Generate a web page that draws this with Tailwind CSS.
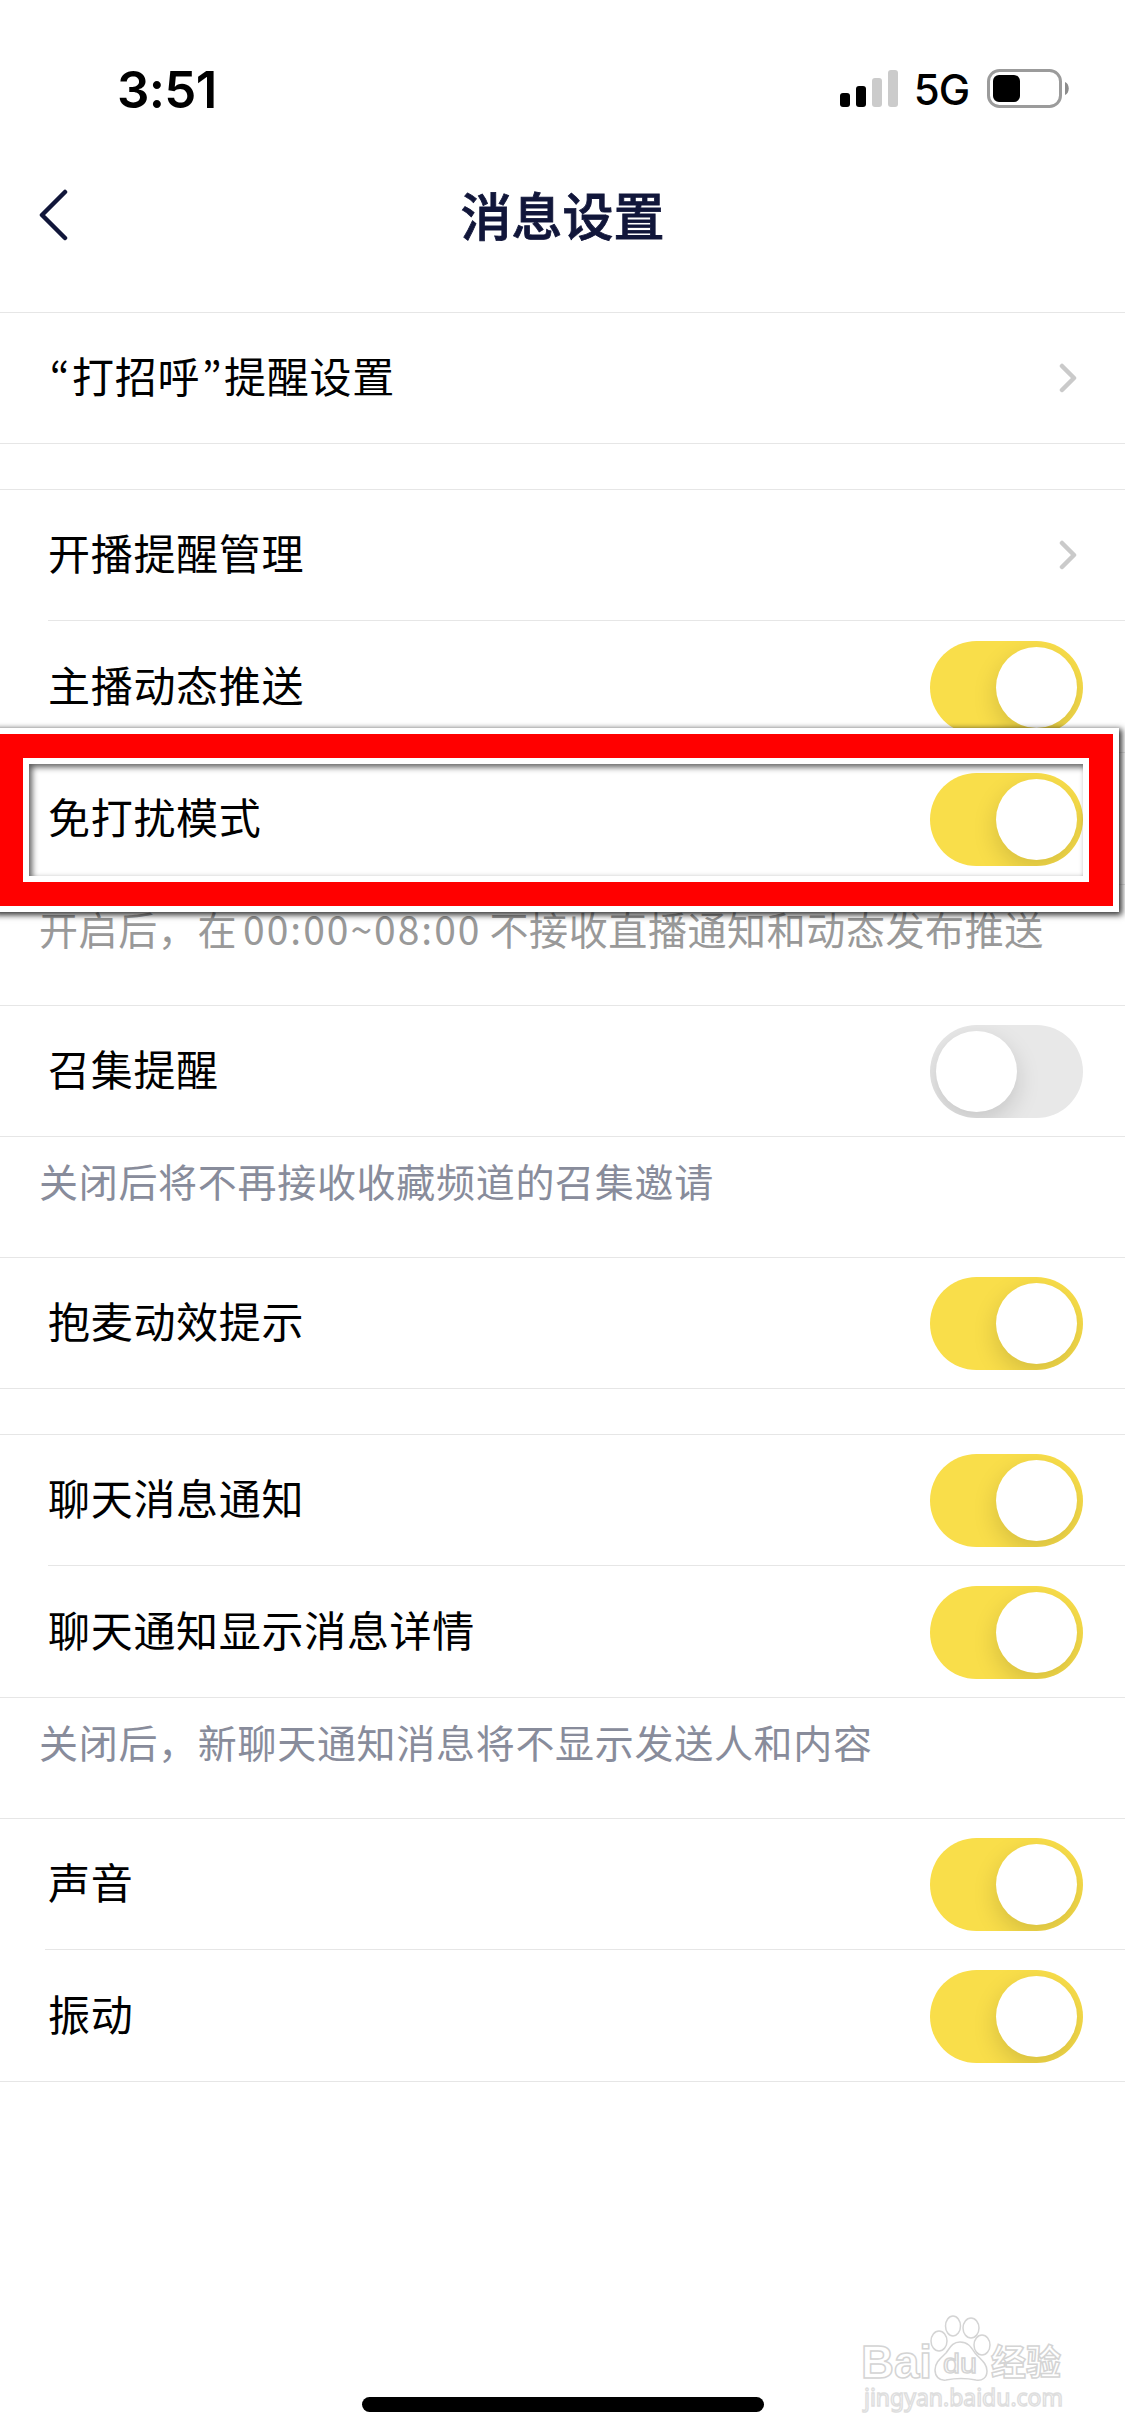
<!DOCTYPE html>
<html lang="zh-CN">
  <head>
    <meta charset="UTF-8" />
    <meta name="viewport" content="width=device-width, initial-scale=1.0" />
    <script src="https://cdn.jsdelivr.net/npm/@tailwindcss/browser@4"></script>
    <title>消息设置</title>
  </head>
  <body class="bg-white">
    <div class="relative flex flex-col w-[1125px] h-[2436px] overflow-hidden bg-white text-black font-['Noto_Sans_CJK_SC',sans-serif]">
      <!-- status bar -->
      <div class="flex items-center justify-between h-[132px] pt-[44px] pl-[117px] pr-[56px] font-['Inter',sans-serif]">
        <span class="text-[51px] leading-[90px] font-semibold tracking-[-0.7px] pt-[3px]">3:51</span>
        <div class="flex items-center">
          <svg class="w-[58px] h-[37px]" viewBox="0 0 58 37">
            <rect x="0" y="23" width="10" height="14" rx="3" />
            <rect x="16" y="16" width="10" height="21" rx="3" />
            <rect x="32" y="8" width="10" height="29" rx="3" fill="#cbcbcb" />
            <rect x="48" y="0" width="10" height="37" rx="3" fill="#cbcbcb" />
          </svg>
          <span class="w-[89px] text-center text-[42px] leading-[90px] font-medium tracking-[-1px] pt-[4px] pr-[2px]">5G</span>
          <svg class="w-[82px] h-[39px]" viewBox="0 0 82 39">
            <rect x="1.5" y="1.5" width="72" height="36" rx="11" fill="none" stroke="#9b9b9b" stroke-width="3" />
            <rect x="6" y="6" width="27" height="27" rx="6" />
            <path d="M78 13c5 2 5 11 0 13z" fill="#8c8c8c" />
          </svg>
        </div>
      </div>

      <!-- nav bar -->
      <div class="flex items-center justify-between h-[180px] pl-[38px] pr-[38px] pb-[16px] text-[#11163a]">
        <svg class="w-[30px] h-[54px] mt-[2px]" viewBox="0 0 30 54" fill="none" stroke="currentColor" stroke-width="4.5" stroke-linecap="round" stroke-linejoin="round">
          <path d="M27 4L4 27l23 23" />
        </svg>
        <h1 class="text-[51px] leading-none font-medium [-webkit-text-stroke:0.8px_#11163a]">消息设置</h1>
        <span class="w-[30px]"></span>
      </div>

      <!-- settings -->
      <main class="flex flex-col text-[42px] tracking-[0.7px]">
        <section class="border-y border-[#e6e6e6] mb-[45px]">
          <div class="flex items-center justify-between h-[130px] pl-[48px] pr-[48px]">
            <span class="flex pb-2"><span lang="ko" class="w-[24px] text-center font-['Noto_Sans_CJK_KR',sans-serif]">“</span>打招呼<span lang="ko" class="w-[24px] text-center font-['Noto_Sans_CJK_KR',sans-serif]">”</span>提醒设置</span>
            <svg class="w-[18px] h-[30px]" viewBox="0 0 18 30" fill="none" stroke="#cacaca" stroke-width="4.5" stroke-linecap="round" stroke-linejoin="round"><path d="M3 3l12 12L3 27" /></svg>
          </div>
        </section>

        <section class="border-y border-[#e6e6e6]">
          <div class="flex items-center justify-between h-[130px] pl-[48px] pr-[48px]">
            <span class="pb-2">开播提醒管理</span>
            <svg class="w-[18px] h-[30px]" viewBox="0 0 18 30" fill="none" stroke="#cacaca" stroke-width="4.5" stroke-linecap="round" stroke-linejoin="round"><path d="M3 3l12 12L3 27" /></svg>
          </div>
          <div class="flex items-center justify-between h-[132px] pt-px ml-[48px] pr-[42px] border-t border-[#e6e6e6]">
            <span class="pb-2">主播动态推送</span>
            <span class="flex justify-end w-[153px] h-[93px] p-[6px] rounded-full overflow-hidden bg-[#f9de4a]"><i class="w-[81px] h-[81px] rounded-full bg-white shadow-[0_9px_24px_rgba(0,0,0,0.15)]"></i></span>
          </div>
          <div class="flex items-center justify-between h-[132px] pt-px ml-[48px] pr-[42px] border-t border-[#e6e6e6]">
            <span class="pb-2">免打扰模式</span>
            <span class="flex justify-end w-[153px] h-[93px] p-[6px] rounded-full overflow-hidden bg-[#f9de4a]"><i class="w-[81px] h-[81px] rounded-full bg-white shadow-[0_9px_24px_rgba(0,0,0,0.15)]"></i></span>
          </div>
        </section>
        <p class="h-[120px] pt-[13px] pl-[39px] text-[39px] leading-[60px] tracking-[0.6px] text-[#999] whitespace-nowrap">开启后，在<span class="tracking-[2px] pl-[6px] pr-[8px]">00:00~08:00</span>不接收直播通知和动态发布推送</p>

        <section class="border-y border-[#e6e6e6]">
          <div class="flex items-center justify-between h-[130px] pl-[48px] pr-[42px]">
            <span class="pb-2">召集提醒</span>
            <span class="flex w-[153px] h-[93px] p-[6px] rounded-full overflow-hidden bg-[#e8e8e8]"><i class="w-[81px] h-[81px] rounded-full bg-white shadow-[0_9px_24px_rgba(0,0,0,0.15)]"></i></span>
          </div>
        </section>
        <p class="h-[120px] pt-[13px] pl-[39px] text-[39px] leading-[60px] tracking-[0.7px] text-[#888c9b] whitespace-nowrap">关闭后将不再接收收藏频道的召集邀请</p>

        <section class="border-y border-[#e6e6e6] mb-[45px]">
          <div class="flex items-center justify-between h-[130px] pl-[48px] pr-[42px]">
            <span class="pb-2">抱麦动效提示</span>
            <span class="flex justify-end w-[153px] h-[93px] p-[6px] rounded-full overflow-hidden bg-[#f9de4a]"><i class="w-[81px] h-[81px] rounded-full bg-white shadow-[0_9px_24px_rgba(0,0,0,0.15)]"></i></span>
          </div>
        </section>

        <section class="border-y border-[#e6e6e6]">
          <div class="flex items-center justify-between h-[130px] pl-[48px] pr-[42px]">
            <span class="pb-2">聊天消息通知</span>
            <span class="flex justify-end w-[153px] h-[93px] p-[6px] rounded-full overflow-hidden bg-[#f9de4a]"><i class="w-[81px] h-[81px] rounded-full bg-white shadow-[0_9px_24px_rgba(0,0,0,0.15)]"></i></span>
          </div>
          <div class="flex items-center justify-between h-[132px] pt-px ml-[48px] pr-[42px] border-t border-[#e6e6e6]">
            <span class="pb-2">聊天通知显示消息详情</span>
            <span class="flex justify-end w-[153px] h-[93px] p-[6px] rounded-full overflow-hidden bg-[#f9de4a]"><i class="w-[81px] h-[81px] rounded-full bg-white shadow-[0_9px_24px_rgba(0,0,0,0.15)]"></i></span>
          </div>
        </section>
        <p class="h-[120px] pt-[13px] pl-[39px] text-[39px] leading-[60px] tracking-[0.7px] text-[#888c9b] whitespace-nowrap">关闭后，新聊天通知消息将不显示发送人和内容</p>

        <section class="border-y border-[#e6e6e6]">
          <div class="flex items-center justify-between h-[130px] pl-[48px] pr-[42px]">
            <span class="pb-2">声音</span>
            <span class="flex justify-end w-[153px] h-[93px] p-[6px] rounded-full overflow-hidden bg-[#f9de4a]"><i class="w-[81px] h-[81px] rounded-full bg-white shadow-[0_9px_24px_rgba(0,0,0,0.15)]"></i></span>
          </div>
          <div class="flex items-center justify-between h-[132px] pt-px ml-[45px] pl-[3px] pr-[42px] border-t border-[#e6e6e6]">
            <span class="pb-2">振动</span>
            <span class="flex justify-end w-[153px] h-[93px] p-[6px] rounded-full overflow-hidden bg-[#f9de4a]"><i class="w-[81px] h-[81px] rounded-full bg-white shadow-[0_9px_24px_rgba(0,0,0,0.15)]"></i></span>
          </div>
        </section>
      </main>

      <!-- red highlight frame -->
      <div class="absolute left-[-7px] top-[728px] w-[1126px] h-[184px] border-6 border-white shadow-[2px_2px_6px_1px_rgba(0,0,0,0.8)]">
        <div class="w-full h-full border-24 border-[#ff0000]">
          <div class="w-full h-full border-6 border-white shadow-[inset_3px_3px_6px_rgba(0,0,0,0.65)]"></div>
        </div>
      </div>

      <!-- home indicator -->
      <div class="absolute left-[362px] top-[2397px] w-[402px] h-[15px] rounded-full bg-black"></div>

      <!-- watermark -->
      <svg class="absolute left-[855px] top-[2305px] w-[220px] h-[115px]" viewBox="0 0 220 115" fill="#fff" stroke="#d4d4d4" stroke-width="1.5">
        <text x="6" y="73" font-family="Liberation Sans" font-weight="700" font-size="46" textLength="71" lengthAdjust="spacingAndGlyphs">Bai</text>
        <ellipse cx="84" cy="36" rx="8" ry="10" />
        <ellipse cx="98" cy="21" rx="7.5" ry="10" />
        <ellipse cx="116" cy="23" rx="8" ry="10" />
        <ellipse cx="127" cy="40" rx="8" ry="10" />
        <path d="M105 37c8 0 11 5 15 11 5 6 12 10 12 18 0 7-5 10-11 9-10-2-20-2-30 0-7 1-11-4-11-10 0-8 6-12 11-17 4-5 6-11 14-11z" />
        <text x="88" y="68" font-family="Liberation Sans" font-size="28" textLength="34" lengthAdjust="spacingAndGlyphs">du</text>
        <text x="136" y="70" font-family="Noto Sans CJK SC" font-weight="700" font-size="35" textLength="70">经验</text>
        <text x="9" y="101" font-family="Noto Sans" font-size="24" textLength="199" lengthAdjust="spacingAndGlyphs" stroke="#dedede">jingyan.baidu.com</text>
      </svg>
    </div>
  </body>
</html>
